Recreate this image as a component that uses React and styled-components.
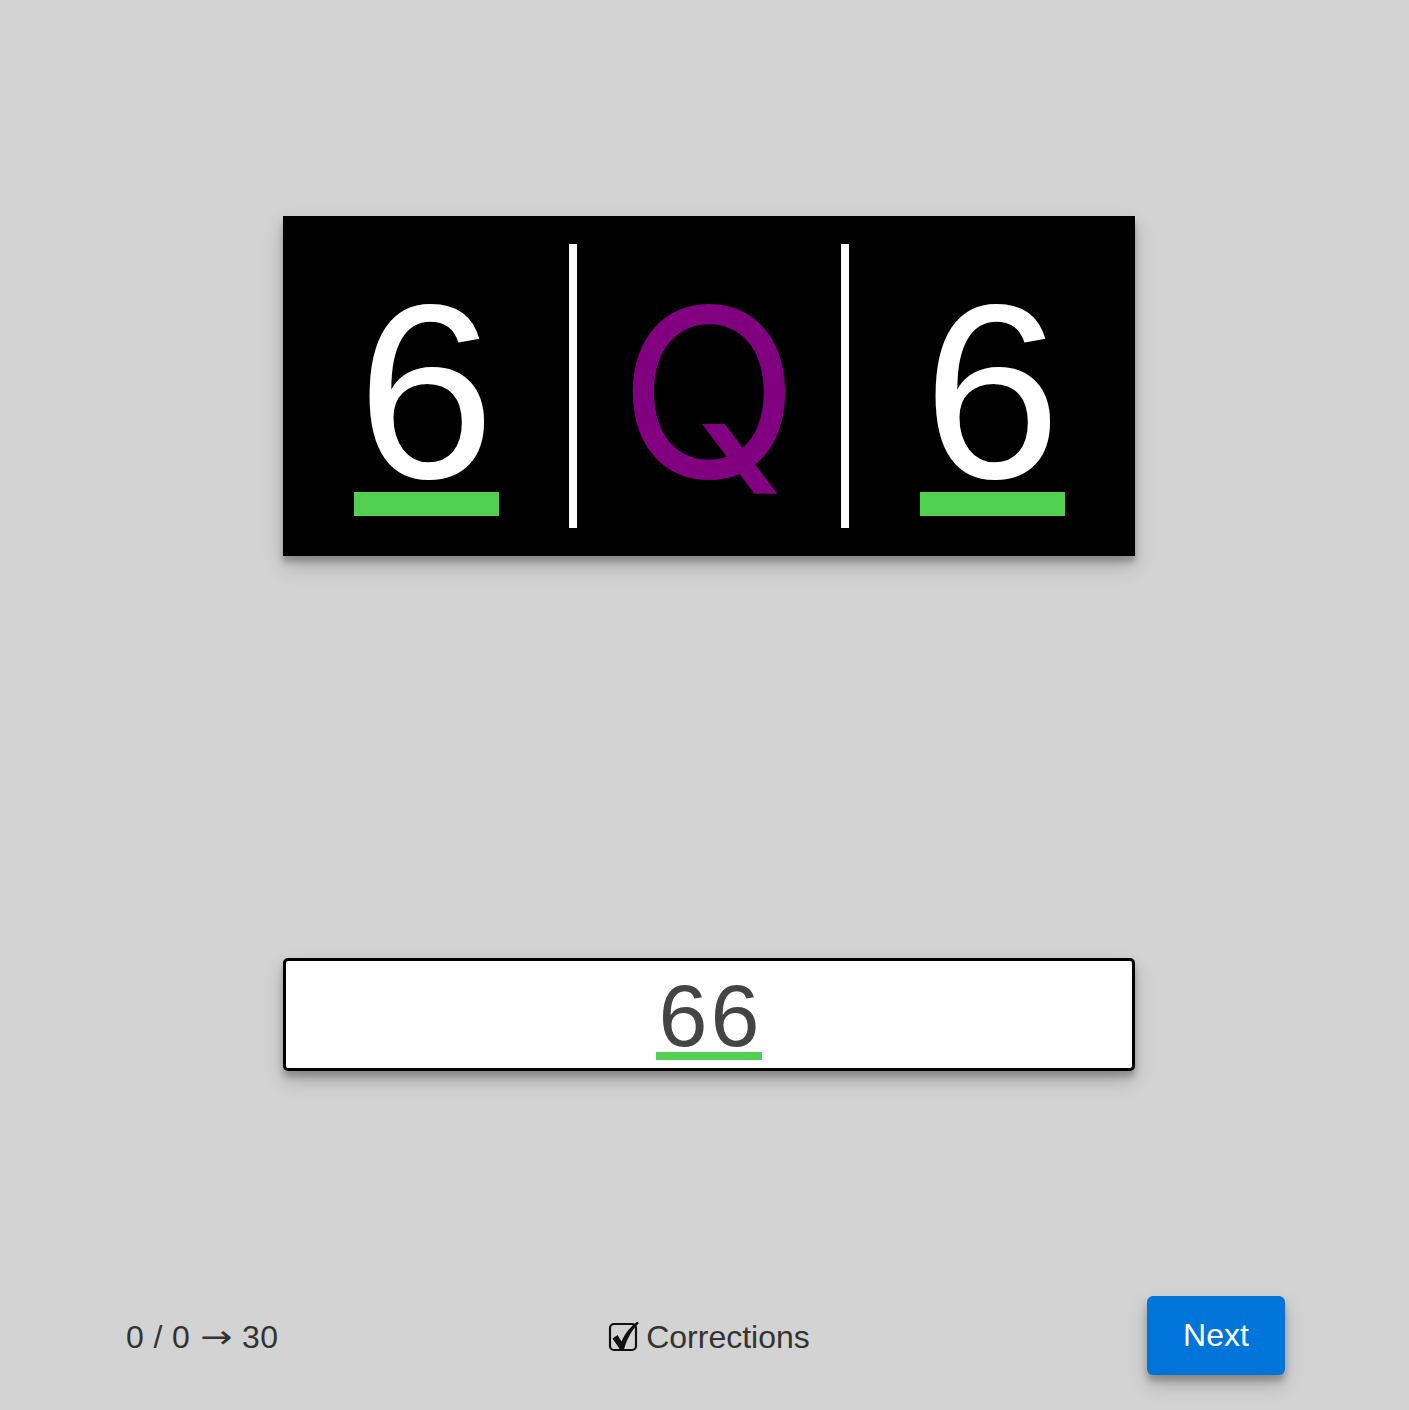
import React from "react";
import styled, { createGlobalStyle } from "styled-components";

const GlobalStyle = createGlobalStyle`
  html, body {
    margin: 0;
    padding: 0;
    background: #d3d3d3;
  }
  body {
    font-family: "Liberation Sans", Arial, Helvetica, sans-serif;
  }
`;

const Page = styled.div`
  min-height: 1410px;
  box-sizing: border-box;
  padding: 216px 0 0 9px;
  display: flex;
  flex-direction: column;
  align-items: center;
`;

const shadow = "0 10px 20px rgba(0,0,0,0.19), 0 6px 6px rgba(0,0,0,0.23)";

const Stimulus = styled.div`
  width: 852px;
  height: 340px;
  background: #000;
  display: grid;
  grid-template-columns: 286px 8px 264px 8px 286px;
  box-shadow: ${shadow};
`;

const Cell = styled.div`
  display: flex;
  flex-direction: column;
  align-items: center;
  padding-top: 76px;
`;

const Glyph = styled.span`
  font-family: ${(p) => (p.$alt ? '"Inter", "Liberation Sans", sans-serif' : '"Liberation Sans", Arial, sans-serif')};
  font-size: ${(p) => (p.$alt ? "236px" : "248px")};
  line-height: 200px;
  color: ${(p) => p.$color};
`;

const Mark = styled.div`
  width: 145px;
  height: 24px;
  background: #51d052;
  visibility: ${(p) => (p.$show ? "visible" : "hidden")};
`;

const Divider = styled.div`
  align-self: center;
  width: 8px;
  height: 284px;
  background: #fff;
`;

const AnswerBox = styled.div`
  margin-top: 402px;
  width: 852px;
  height: 113px;
  box-sizing: border-box;
  border: 3px solid #000;
  border-radius: 5px;
  background: #fff;
  box-shadow: ${shadow};
  display: flex;
  justify-content: center;
  align-items: flex-start;
  padding-top: 18px;
`;

const AnswerText = styled.span`
  display: inline-block;
  font-size: 88px;
  line-height: 73px;
  letter-spacing: 3px;
  padding-left: 3px;
  color: #444;
  border-bottom: 8px solid #51d052;
`;

const Footer = styled.div`
  margin-top: 225px;
  align-self: stretch;
  margin-left: 117px;
  margin-right: 117px;
  display: grid;
  grid-template-columns: 1fr auto 1fr;
  align-items: center;
  font-size: 32px;
  line-height: 40px;
  color: #333;
  padding-top: 2px;
`;

const Score = styled.div`
  justify-self: start;
  white-space: pre;
  letter-spacing: 0.4px;
`;

const Arrow = styled.span`
  font-family: "DejaVu Sans", sans-serif;
  font-size: 32px;
  display: inline-block;
  transform: scaleX(1.2);
  margin: 0 3px;
`;

const Toggle = styled.label`
  display: flex;
  align-items: center;
  gap: 7px;
  cursor: pointer;
`;

const NextButton = styled.button`
  justify-self: end;
  margin-right: 7px;
  margin-top: -2px;
  width: 138px;
  height: 79px;
  border: none;
  border-radius: 6px;
  background: #0074d9;
  color: #fff;
  font-family: "Liberation Sans", Arial, sans-serif;
  font-size: 32px;
  box-shadow: ${shadow};
  cursor: pointer;
`;

const CheckIcon = () => (
  <svg width="31" height="31" viewBox="0 0 31 31">
    <rect x="2" y="3" width="26" height="26" rx="4" fill="none" stroke="#111" strokeWidth="2.2" />
    <path
      d="M4.5 17.5 L9.5 14 L13.5 20.5 C17 12.5 22 6 29.5 0.5 L30.8 2.2 C24.5 8.5 19.5 16 16 28.5 L12 28.5 Z"
      fill="#111"
    />
  </svg>
);

export default function App() {
  return (
    <>
      <GlobalStyle />
      <Page>
        <Stimulus>
          <Cell>
            <Glyph $color="#fff">6</Glyph>
            <Mark $show />
          </Cell>
          <Divider />
          <Cell>
            <Glyph $alt $color="#800080">Q</Glyph>
            <Mark />
          </Cell>
          <Divider />
          <Cell>
            <Glyph $color="#fff">6</Glyph>
            <Mark $show />
          </Cell>
        </Stimulus>
        <AnswerBox>
          <AnswerText>66</AnswerText>
        </AnswerBox>
        <Footer>
          <Score>
            {"0 / 0 "}
            <Arrow>→</Arrow>
            {" 30"}
          </Score>
          <Toggle>
            <CheckIcon />
            Corrections
          </Toggle>
          <NextButton>Next</NextButton>
        </Footer>
      </Page>
    </>
  );
}
